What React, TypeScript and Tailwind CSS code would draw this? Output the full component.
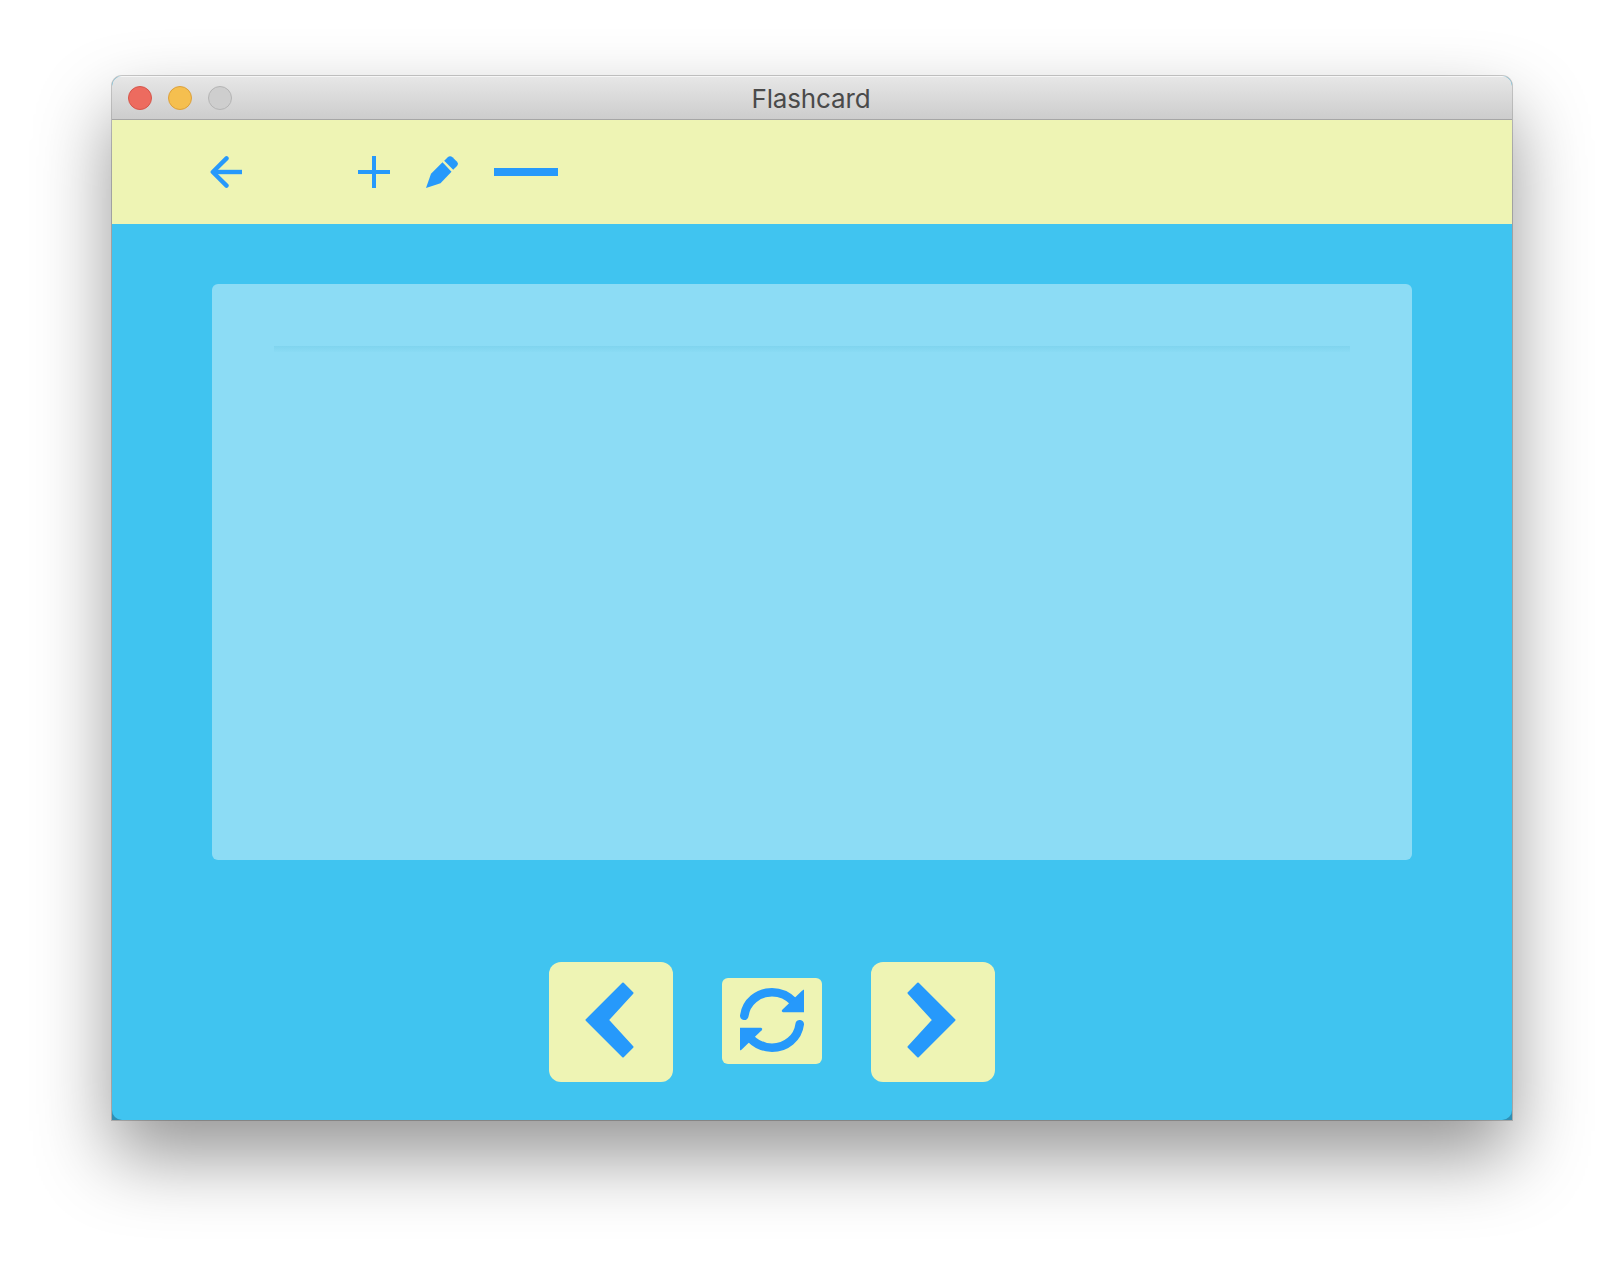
const BLUE = '#2699fb';

function Chevron({ flip = false }: { flip?: boolean }) {
  return (
    <svg width="49" height="76" viewBox="0 0 49 76" className={flip ? 'blur-[0.7px] -scale-x-100' : 'blur-[0.7px]'}>
      <path
        d="M1.5 38 L38 1.5 L47.5 11 L22.8 38 L47.5 65 L38 74.5 Z"
        fill={BLUE}
        stroke={BLUE}
        strokeWidth="2"
        strokeLinejoin="round"
      />
    </svg>
  );
}

function Refresh() {
  return (
    <svg width="64" height="64" viewBox="0 0 64 64" className="blur-[0.5px]">
      <g id="half">
        <path d="M4.3 27.8 C6 14 18 4.3 32 4.3 C40 4.3 48 7.8 54 14" fill="none" stroke={BLUE} strokeWidth="8.6" strokeLinecap="round" />
        <path d="M64 1.5 V24.3 H43 Q41 23.5 42.3 21.8 L62 2.8 Z" fill={BLUE} />
      </g>
      <use href="#half" transform="rotate(180 32 32)" />
    </svg>
  );
}

export default function App() {
  return (
    <div className="h-[1268px] w-[1624px] overflow-hidden bg-white pt-[76px] pl-[112px]">
      <div className="h-[1044px] w-[1400px] rounded-t-[10px] bg-[#2f8fb4] shadow-[0_0_0_1px_rgba(0,0,0,0.2),0_36px_76px_0_rgba(0,0,0,0.42)]">
        <div className="flex h-full flex-col overflow-hidden rounded-[10px] bg-[#40c4f0]">
          <header className="grid h-11 shrink-0 grid-cols-[1fr_auto_1fr] items-center border-b border-[#a6a6a6] bg-linear-to-b from-[#e7e7e7] to-[#cdcdcd] px-4 shadow-[inset_0_1px_0_#f6f6f6]">
            <div className="flex gap-4 pt-px">
              <span className="size-6 rounded-full border border-[#d5564b] bg-[#ed6b5f]" />
              <span className="size-6 rounded-full border border-[#dca03c] bg-[#f5bf4f]" />
              <span className="size-6 rounded-full border border-[#b4b4b4] bg-[#cecece]" />
            </div>
            <h1 className="mr-[2px] pt-[3px] font-['Inter',sans-serif] text-[26px] leading-8 tracking-[-0.15px] text-[#4a4a4a]">Flashcard</h1>
          </header>

          <nav className="flex h-[104px] shrink-0 items-center bg-[#eef4b4] pl-[98px]">
            <button className="mr-[116px]" aria-label="Back">
              <svg width="32" height="32" viewBox="0 0 32 32" fill="none" stroke={BLUE} strokeWidth="4.4" className="blur-[0.4px]">
                <path d="M16.5 2.4 L2.8 16 L16.5 29.6" strokeLinecap="round" strokeLinejoin="round" />
                <path d="M3 16 H32" />
              </svg>
            </button>
            <button className="mr-9" aria-label="Add">
              <svg width="32" height="32" viewBox="0 0 32 32" fill={BLUE}>
                <path d="M14 0h4v14h14v4H18v14h-4V18H0v-4h14z" />
              </svg>
            </button>
            <button className="mr-9" aria-label="Edit">
              <svg width="32" height="32" viewBox="0 0 32 32" fill={BLUE}>
                <path d="M0 32 L5 17.8 L16.5 6.3 L25.5 15.7 L14.5 27.2 Z" />
                <path d="M18.2 4.8 L21.5 1.4 Q24 -1 26.5 1.2 L30.8 5.4 Q33 7.8 31 10 L27.2 13.8 Z" />
              </svg>
            </button>
            <button className="h-2 w-16 bg-[#2699fb]" aria-label="Remove" />
          </nav>

          <main className="flex grow flex-col px-[100px] pt-[60px]">
            <section className="h-[576px] rounded-md bg-[#8cdcf5] px-[62px] pt-[62px]">
              <div className="h-[6px] bg-linear-to-b from-[#80d4ee] to-[#8adbf4]" />
            </section>
            <div className="mt-[102px] flex items-start pl-[337px]">
              <button className="flex h-[120px] w-[124px] items-start rounded-xl bg-[#eef4b4] pt-5 pl-9" aria-label="Previous">
                <Chevron />
              </button>
              <button className="mx-[49px] mt-4 flex h-[86px] w-[100px] items-start justify-center rounded-md bg-[#eef4b4] pt-[10px]" aria-label="Flip">
                <Refresh />
              </button>
              <button className="flex h-[120px] w-[124px] items-start rounded-xl bg-[#eef4b4] pt-5 pl-9" aria-label="Next">
                <Chevron flip />
              </button>
            </div>
          </main>
        </div>
      </div>
    </div>
  );
}
